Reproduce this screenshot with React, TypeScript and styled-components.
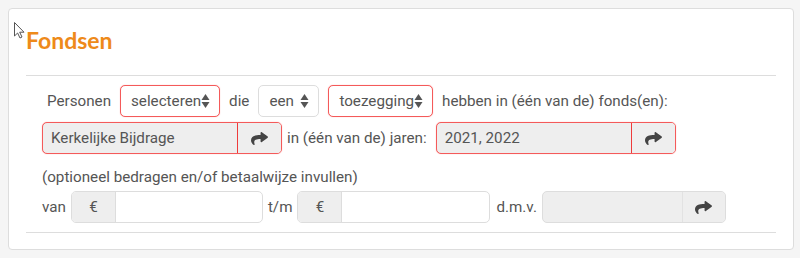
import styled, { createGlobalStyle } from 'styled-components'

const GlobalStyle = createGlobalStyle`
    html, body {
        margin: 0;
        padding: 0;
        background: #f5f5f5;
    }
    body {
        font-family: Roboto, 'Liberation Sans', sans-serif;
        font-size: 15.2px;
        color: #555;
    }
`
const Page = styled.div`
    position: relative;
    padding: 8px 6px 8px 8px;
`
const Panel = styled.section`
    box-sizing: border-box;
    height: 242px;
    background: #fff;
    border: 1px solid #ddd;
    border-radius: 4px;
    padding: 18px 17px 0 17px;
`
const Title = styled.h2`
    margin: 0;
    font-family: Lato, 'Open Sans', sans-serif;
    font-weight: 700;
    font-size: 23px;
    line-height: 26px;
    color: #ee8a1a;
`
const Rule = styled.hr<{ $top: number }>`
    margin: ${(p) => p.$top}px 0 0 0;
    border: 0;
    height: 1px;
    background: #ddd;
`
const Form = styled.div`
    padding: 9px 0 0 16px;
`
const Row = styled.div<{ $gap: number; $top?: number }>`
    display: flex;
    align-items: center;
    height: 32px;
    gap: ${(p) => p.$gap}px;
    margin-top: ${(p) => p.$top || 0}px;
`
const Label = styled.span<{ $left?: number; $right?: number }>`
    white-space: nowrap;
    line-height: 20px;
    margin-left: ${(p) => p.$left || 0}px;
    margin-right: ${(p) => p.$right || 0}px;
`
const Note = styled.div`
    margin-top: 13px;
    line-height: 20px;
`
const SelectBox = styled.div<{ $invalid?: boolean; $width?: number }>`
    box-sizing: border-box;
    display: inline-flex;
    align-items: center;
    justify-content: space-between;
    height: 32px;
    width: ${(p) => (p.$width ? `${p.$width}px` : 'auto')};
    padding: 0 9px 0 10px;
    border: 1px solid ${(p) => (p.$invalid ? '#f45a5a' : '#ddd')};
    box-shadow: ${(p) => (p.$invalid ? '0 0 1px rgba(255, 60, 60, 0.5)' : 'none')};
    border-radius: 5px;
    background: #fff;
    cursor: pointer;
`
const Group = styled.div<{ $width: number; $invalid?: boolean; $readonly?: boolean }>`
    box-sizing: border-box;
    display: flex;
    width: ${(p) => p.$width}px;
    height: 32px;
    border: 1px solid ${(p) => (p.$invalid ? '#f45a5a' : '#ddd')};
    box-shadow: ${(p) => (p.$invalid ? '0 0 1px rgba(255, 60, 60, 0.5)' : 'none')};
    border-radius: 5px;
    background: ${(p) => (p.$readonly ? '#eee' : '#fff')};
    overflow: hidden;
`
const Field = styled.div`
    flex: 1;
    display: flex;
    align-items: center;
    padding: 0 8px;
`
const Addon = styled.div`
    width: 43px;
    display: flex;
    align-items: center;
    justify-content: center;
    background: #eee;
    border-right: 1px solid #ddd;
`
const GoButton = styled.button<{ $invalid?: boolean; $width: number }>`
    width: ${(p) => p.$width}px;
    padding: 0;
    display: flex;
    align-items: center;
    justify-content: center;
    background: #eee;
    border: 0;
    border-left: 1px solid ${(p) => (p.$invalid ? '#ee3b3b' : '#e2e2e2')};
    color: #444;
    cursor: pointer;
`
const Pointer = styled.svg`
    position: absolute;
    left: 14px;
    top: 22px;
`

const UpDown = () => (
    <svg width="9" height="16" viewBox="0 0 9 16">
        <path d="M4.5 1 L8.5 7 L0.5 7 Z" fill="#555" />
        <path d="M4.5 15 L8.5 9 L0.5 9 Z" fill="#555" />
    </svg>
)

const ShareIcon = () => (
    <svg width="17" height="13" viewBox="0 32 512 448" preserveAspectRatio="none">
        <path
            fill="currentColor"
            d="M503.691 189.836L327.687 37.851C312.281 24.546 288 35.347 288 56.015v80.053C127.371 137.907 0 170.1 0 322.326c0 61.441 39.581 122.309 83.333 154.132 13.653 9.931 33.111-2.533 28.077-18.631C66.066 312.814 132.917 274.316 288 272.085V360c0 20.7 24.3 31.453 39.687 18.164l176.004-152c11.071-9.562 11.086-26.753 0-36.328z"
        />
    </svg>
)

const App = () => {
    return (
        <Page>
            <GlobalStyle />
            <Panel>
                <Title>Fondsen</Title>
                <Rule $top={22} />
                <Form>
                    <Row $gap={9}>
                        <Label $left={5}>Personen</Label>
                        <SelectBox $invalid>
                            selecteren<UpDown />
                        </SelectBox>
                        <Label>die</Label>
                        <SelectBox $width={61}>
                            een<UpDown />
                        </SelectBox>
                        <SelectBox $invalid>
                            toezegging<UpDown />
                        </SelectBox>
                        <Label>hebben in (één van de) fonds(en):</Label>
                    </Row>
                    <Row $gap={5} $top={5}>
                        <Group $width={240} $invalid $readonly>
                            <Field>Kerkelijke Bijdrage</Field>
                            <GoButton $invalid $width={44}>
                                <ShareIcon />
                            </GoButton>
                        </Group>
                        <Label $right={4}>in (één van de) jaren:</Label>
                        <Group $width={240} $invalid $readonly>
                            <Field>2021, 2022</Field>
                            <GoButton $invalid $width={44}>
                                <ShareIcon />
                            </GoButton>
                        </Group>
                    </Row>
                    <Note>(optioneel bedragen en/of betaalwijze invullen)</Note>
                    <Row $gap={5} $top={4}>
                        <Label>van</Label>
                        <Group $width={192}>
                            <Addon>€</Addon>
                            <Field />
                        </Group>
                        <Label>t/m</Label>
                        <Group $width={193}>
                            <Addon>€</Addon>
                            <Field />
                        </Group>
                        <Label $left={1}>d.m.v.</Label>
                        <Group $width={184} $readonly>
                            <Field />
                            <GoButton $width={43}>
                                <ShareIcon />
                            </GoButton>
                        </Group>
                    </Row>
                </Form>
                <Rule $top={9} />
            </Panel>
            <Pointer width="11" height="17" viewBox="0 0 11 17">
                <path d="M0.5 0.5 L0.5 14 L3.6 11 L6 16 L8 15 L5.7 10.2 L10 10.2 Z" fill="#fff" stroke="#555" strokeWidth="1" />
            </Pointer>
        </Page>
    )
}

export default App
